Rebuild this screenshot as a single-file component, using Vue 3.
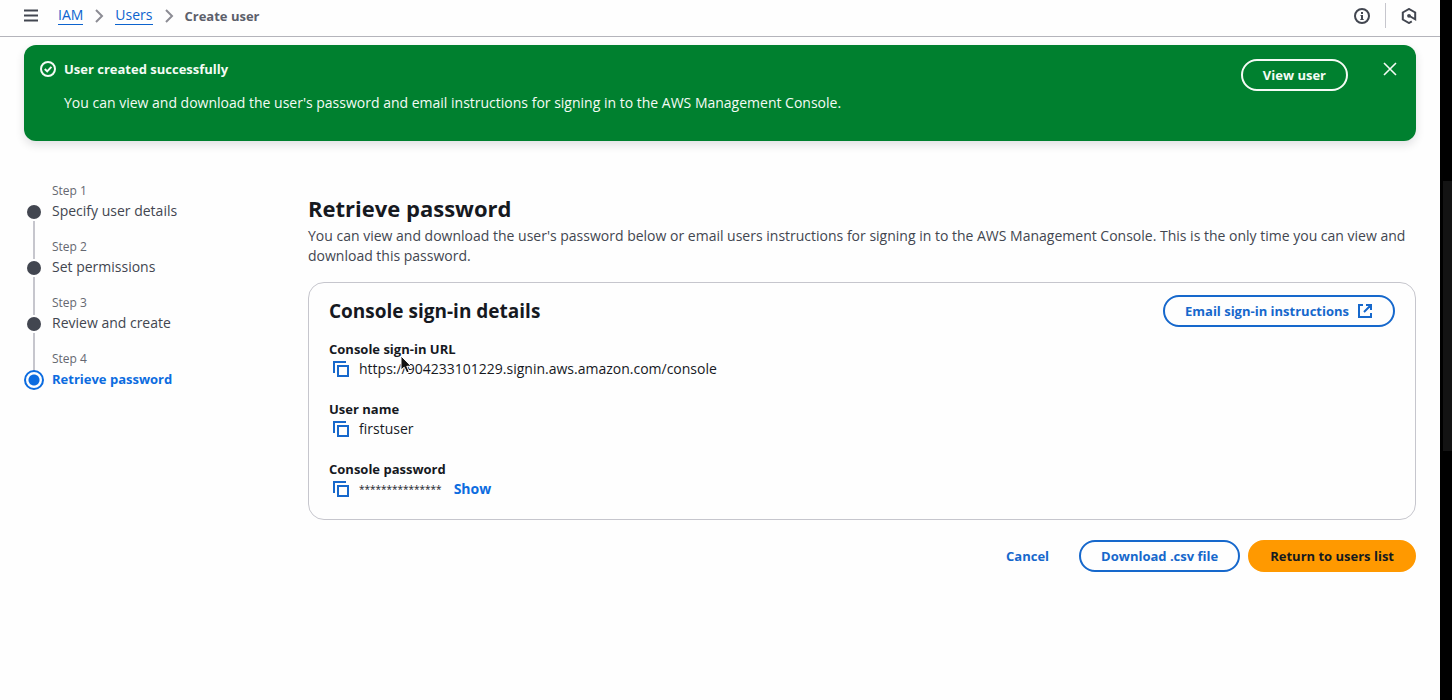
<script setup>
const crumbs = ['IAM', 'Users']
const steps = ['Specify user details', 'Set permissions', 'Review and create', 'Retrieve password']
const details = [
  { label: 'Console sign-in URL', value: 'https://904233101229.signin.aws.amazon.com/console' },
  { label: 'User name', value: 'firstuser' },
  { label: 'Console password', value: '***************', secret: true },
]
</script>

<template>
  <div class="shell">
    <div class="page">
      <header class="topbar">
        <button class="icon-btn menu" aria-label="Open navigation">
          <svg width="16" height="16" viewBox="0 0 16 16"><path d="M1 2.5h14M1 7.5h14M1 12.5h14" /></svg>
        </button>
        <nav class="crumbs" aria-label="Breadcrumbs">
          <template v-for="c in crumbs" :key="c">
            <a href="#">{{ c }}</a>
            <svg class="chevron" width="16" height="16" viewBox="0 0 16 16"><path d="M5 2l6 6-6 6" /></svg>
          </template>
          <span class="current">Create user</span>
        </nav>
        <div class="tools">
          <button class="icon-btn" aria-label="Information">
            <svg width="16" height="16" viewBox="0 0 16 16"><circle cx="8" cy="8" r="7" /><path d="M8 12V7M8 4v2" /><path class="thin" d="M6.5 7.5H8M6.3 11.5h3.4" /></svg>
          </button>
          <span class="divider"></span>
          <button class="icon-btn" aria-label="Assistant">
            <svg width="16" height="16" viewBox="0 0 16 16"><path d="M10.8 13.4L8 15l-6.2-3.5v-7L8 1l6.2 3.5v6.8L8.5 8" /><circle class="solid" cx="8" cy="7.8" r="1.9" /></svg>
          </button>
        </div>
      </header>

      <section class="flash" role="status">
        <svg class="ok" width="16" height="16" viewBox="0 0 16 16"><circle cx="8" cy="8" r="7" /><path d="M4.8 8l2.4 2.4 4.2-4.6" /></svg>
        <div class="flash-text">
          <strong>User created successfully</strong>
          <p>You can view and download the user's password and email instructions for signing in to the AWS Management Console.</p>
        </div>
        <button class="btn light">View user</button>
        <button class="icon-btn close" aria-label="Dismiss">
          <svg width="16" height="16" viewBox="0 0 16 16"><path d="M2 2l12 12M14 2L2 14" /></svg>
        </button>
      </section>

      <div class="body">
        <ol class="steps">
          <li v-for="(s, i) in steps" :key="s" :class="{ active: i === steps.length - 1 }">
            <small>Step {{ i + 1 }}</small>
            <div class="step"><i class="dot"></i><a href="#">{{ s }}</a></div>
          </li>
        </ol>

        <main class="content">
          <h1>Retrieve password</h1>
          <p class="intro">You can view and download the user's password below or email users instructions for signing in to the AWS Management Console. This is the only time you can view and download this password.</p>

          <section class="card">
            <div class="card-head">
              <h2>Console sign-in details</h2>
              <button class="btn">
                Email sign-in instructions
                <svg width="16" height="16" viewBox="0 0 16 16"><path d="M6 2H2v12h12v-4M9 2h5v5M14 2L7 9" /></svg>
              </button>
            </div>
            <dl>
              <div v-for="d in details" :key="d.label" class="row">
                <dt>{{ d.label }}</dt>
                <dd>
                  <button class="icon-btn copy" :aria-label="'Copy ' + d.label">
                    <svg width="16" height="16" viewBox="0 0 16 16"><path d="M1 12V1h12M5 5h10v10H5z" /></svg>
                  </button>
                  <span :class="{ masked: d.secret }">{{ d.value }}</span>
                  <button v-if="d.secret" class="show">Show</button>
                </dd>
              </div>
            </dl>
            <svg class="pointer" width="14" height="20" viewBox="0 0 14 20"><path d="M1 1v14l3.2-2.8 2.6 5.6 2.4-1-2.4-5.5h4.4z" /></svg>
          </section>

          <div class="actions">
            <button class="link-btn">Cancel</button>
            <button class="btn">Download .csv file</button>
            <button class="btn primary">Return to users list</button>
          </div>
        </main>
      </div>
    </div>
    <div class="track"><div class="thumb"></div></div>
  </div>
</template>

<style>
body { background: #fefefe; }
</style>

<style scoped>
.shell {
  display: flex;
  min-height: 100vh;
  font: 14px/20px "Open Sans", "Noto Sans", sans-serif;
  color: #16191f;
}
.shell * { box-sizing: border-box; }
.page { flex: 1; min-width: 0; }
.track { width: 12px; flex: none; background: #000; padding: 181px 0 0 3px; }
.thumb { height: 270px; background: #131313; }
svg { display: block; flex: none; fill: none; stroke: currentColor; stroke-width: 2; }
.thin { stroke-width: 1; }
.solid { fill: currentColor; stroke: none; }
button { font: inherit; cursor: pointer; }
a { color: #0c63ce; }
h1, h2, p, dl, dd, ol { margin: 0; padding: 0; }
.icon-btn { border: 0; padding: 0; background: none; color: inherit; }

.topbar {
  display: flex;
  align-items: center;
  height: 37px;
  padding: 0 23px 5px;
  border-bottom: 1px solid #b4b4bb;
  color: #424650;
}
.crumbs { display: flex; align-items: center; margin-left: 19px; }
.crumbs a { text-decoration: none; border-bottom: 1px solid #0c63ce; line-height: 18px; }
.chevron { margin: 0 8px; color: #8c8c94; }
.current { font-size: 13px; font-weight: 700; color: #5c606b; }
.tools { display: flex; align-items: center; gap: 15px; margin-left: auto; }
.divider { width: 1px; height: 25px; background: #c6c6cd; }

.flash {
  display: flex;
  margin: 8px 24px 0;
  padding: 14px 18px 28px 16px;
  border-radius: 12px;
  background: #00802f;
  color: #f4fbf5;
  box-shadow: 0 4px 10px rgba(0, 7, 22, 0.12);
}
.ok { margin: 2px 8px 0 0; }
.flash-text { flex: 1; }
.flash-text strong { display: block; font-size: 13px; font-weight: 700; }
.flash-text p { margin-top: 14px; }
.close { align-self: flex-start; margin: 2px 0 0 34px; }
.close svg { stroke-width: 1.6; }

.btn {
  display: inline-flex;
  align-items: center;
  align-self: flex-start;
  gap: 8px;
  height: 32px;
  padding: 0 20px;
  border: 2px solid #1668cc;
  border-radius: 16px;
  background: transparent;
  color: #1668cc;
  font-size: 13px;
  font-weight: 700;
  white-space: nowrap;
}
.btn.light { border-color: #f4fbf5; color: #f4fbf5; }
.btn.primary { border-color: #ff9900; background: #ff9900; color: #16191f; }

.body { display: flex; padding: 40px 24px 0; }
.steps { flex: none; width: 284px; list-style: none; }
.steps li { position: relative; height: 56px; padding-left: 28px; }
.steps li:not(:last-child)::after {
  content: "";
  position: absolute;
  left: 9px;
  top: 40px;
  width: 2px;
  height: 38px;
  background: #c6c6cd;
}
.steps small { display: block; font-size: 12px; color: #656871; }
.step { position: relative; }
.step a { color: #424650; text-decoration: none; }
.dot { position: absolute; left: -25px; top: 4px; width: 14px; height: 14px; border-radius: 50%; background: #424650; }
.active .step a { color: #0c6ce0; font-size: 13px; font-weight: 700; }
.active .dot { left: -28px; top: 1px; width: 20px; height: 20px; border: 2px solid #0c6ce0; background: radial-gradient(#0c6ce0 5px, #fefefe 6px); }

.content { flex: 1; min-width: 0; padding-top: 12px; }
h1 { font-size: 22px; line-height: 30px; font-weight: 700; }
.intro { margin-top: 3px; color: #424650; }
.card { position: relative; margin-top: 16px; padding: 12px 20px 20px; border: 1px solid #c6c6cd; border-radius: 16px; }
.card-head { display: flex; justify-content: space-between; margin-bottom: 12px; }
h2 { font-size: 19px; line-height: 32px; font-weight: 700; }
.row + .row { margin-top: 20px; }
dt { font-size: 13px; font-weight: 700; }
dd { display: flex; align-items: center; }
.masked { font-size: 10px; }
.copy { margin: 0 10px 0 4px; color: #1668cc; }
.show { margin-left: 12px; padding: 0; border: 0; background: none; color: #0c6ce0; font-weight: 700; }
.pointer { position: absolute; left: 91px; top: 72px; }
.pointer path { fill: #111; stroke: #fff; stroke-width: 1; }
.actions { display: flex; justify-content: flex-end; gap: 8px; margin-top: 20px; }
.link-btn { padding: 0 22px; border: 0; background: none; color: #1668cc; font-size: 13px; font-weight: 700; }
</style>
